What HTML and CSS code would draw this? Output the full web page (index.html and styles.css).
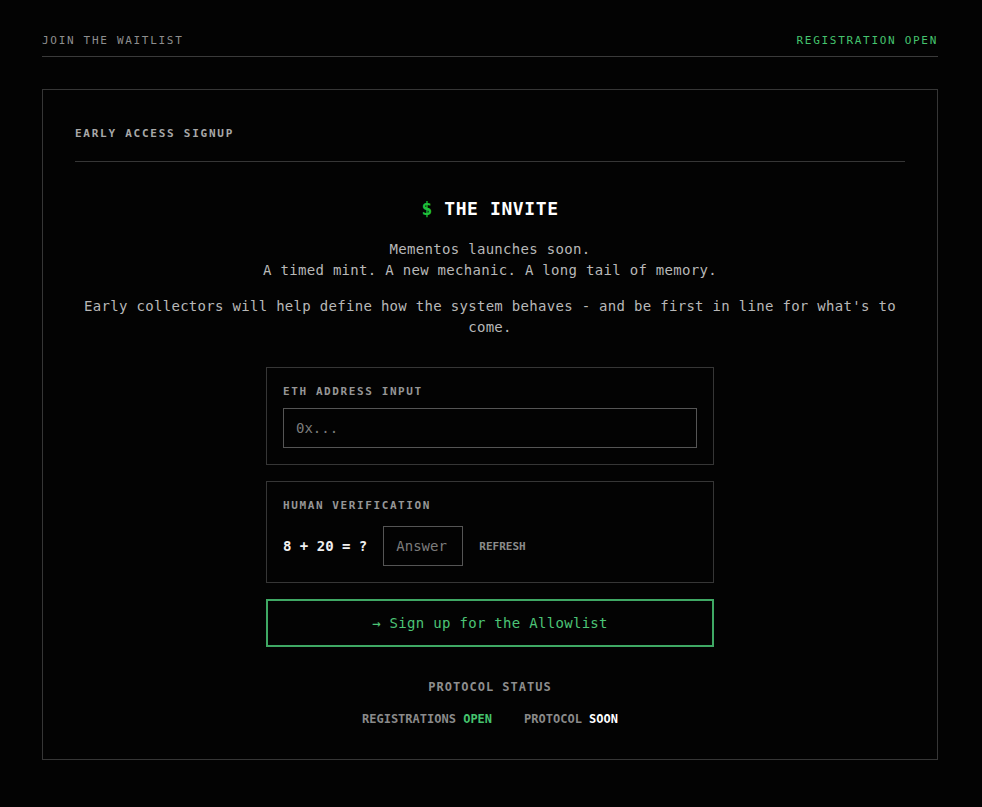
FILE: index.html
```html
<!DOCTYPE html>
<html>
<head>
<link rel="stylesheet" href="styles.css">
</head>
<body>
    <div class="page">
        <header class="topbar">
            <span class="topbar-title">JOIN THE WAITLIST</span>
            <span class="topbar-status">REGISTRATION OPEN</span>
        </header>

        <section class="card">
            <div class="card-label">EARLY ACCESS SIGNUP</div>

            <h1 class="invite-title"><span class="prompt">$</span> THE INVITE</h1>
            <p class="invite-text">Mementos launches soon.<br>A timed mint. A new mechanic. A long tail of memory.</p>
            <p class="invite-text">Early collectors will help define how the system behaves - and be first in line for what's to come.</p>

            <form class="signup" onsubmit="return false">
                <div class="field-box">
                    <label class="field-label" for="eth">ETH ADDRESS INPUT</label>
                    <input id="eth" class="text-input" type="text" placeholder="0x...">
                </div>

                <div class="field-box">
                    <div class="field-label">HUMAN VERIFICATION</div>
                    <div class="captcha-row">
                        <span class="captcha-question">8 + 20 = ?</span>
                        <input class="text-input answer-input" type="text" placeholder="Answer">
                        <button class="refresh-btn" type="button">REFRESH</button>
                    </div>
                </div>

                <button class="submit-btn" type="submit">&rarr; Sign up for the Allowlist</button>
            </form>

            <div class="protocol">
                <div class="protocol-title">PROTOCOL STATUS</div>
                <div class="protocol-row">
                    <span>REGISTRATIONS <b class="ok">OPEN</b></span>
                    <span>PROTOCOL <b class="soon">SOON</b></span>
                </div>
            </div>
        </section>
    </div>
</body>
</html>
```

FILE: styles.css
```css
body {
    margin: 0;
    background-color: #030303;
    color: #b0b0b0;
    font-family: "DejaVu Sans Mono", "Liberation Mono", monospace;
}

.page {
    width: 896px;
    margin-left: 42px;
    padding-bottom: 46px;
}

.topbar {
    display: flex;
    justify-content: space-between;
    padding: 33px 0 7px;
    border-bottom: 1px solid #3a3a3a;
    font-size: 11px;
    line-height: 16px;
    letter-spacing: 1.7px;
}

.topbar-title {
    color: #8e8e8e;
}

.topbar-status {
    color: #45c46e;
}

.card {
    margin-top: 32px;
    border: 1px solid #363636;
    padding: 36px 32px 32px;
}

.card-label {
    font-size: 11px;
    line-height: 16px;
    letter-spacing: 1.75px;
    font-weight: bold;
    color: #a8a8a8;
    padding-bottom: 19px;
    border-bottom: 1px solid #363636;
}

.invite-title {
    margin: 35px 0 0;
    text-align: center;
    font-size: 18px;
    line-height: 24px;
    letter-spacing: 0.6px;
    color: #ffffff;
}

.prompt {
    color: #1fbf3a;
}

.invite-text {
    margin: 18px 0 0;
    text-align: center;
    font-size: 14px;
    line-height: 21px;
    letter-spacing: 0.3px;
    color: #b8b8b8;
}

.invite-text + .invite-text {
    margin-top: 15px;
}

.signup {
    width: 448px;
    margin: 29px auto 0;
    display: flex;
    flex-direction: column;
    gap: 16px;
}

.field-box {
    border: 1px solid #363636;
    padding: 16px;
    display: flex;
    flex-direction: column;
}

.field-label {
    font-size: 11px;
    line-height: 16px;
    letter-spacing: 1.6px;
    font-weight: bold;
    color: #969696;
    margin-bottom: 8px;
}

.field-box + .field-box .field-label {
    margin-bottom: 12px;
}

.text-input {
    box-sizing: border-box;
    height: 40px;
    background-color: #030303;
    border: 1px solid #555555;
    padding: 0 12px;
    font-family: inherit;
    font-size: 14px;
    color: #dddddd;
    outline: none;
}

.text-input::placeholder {
    color: #7c7c7c;
}

.captcha-row {
    display: flex;
    align-items: center;
}

.captcha-question {
    font-size: 14px;
    font-weight: bold;
    color: #f0f0f0;
    margin-right: 16px;
}

.answer-input {
    width: 80px;
}

.refresh-btn {
    background: none;
    border: 0;
    padding: 0;
    margin-left: 16px;
    font-family: inherit;
    font-size: 11px;
    font-weight: bold;
    color: #8c8c8c;
    cursor: pointer;
}

.submit-btn {
    height: 48px;
    background: none;
    border: 2px solid #3fa864;
    font-family: inherit;
    font-size: 14px;
    letter-spacing: 0.3px;
    color: #4cc476;
    cursor: pointer;
}

.protocol {
    margin-top: 32px;
    text-align: center;
}

.protocol-title {
    font-size: 12px;
    line-height: 16px;
    letter-spacing: 1px;
    font-weight: bold;
    color: #8e8e8e;
}

.protocol-row {
    margin-top: 16px;
    display: flex;
    justify-content: center;
    gap: 32px;
    font-size: 12px;
    line-height: 16px;
    font-weight: bold;
    color: #8a8a8a;
}

.protocol-row .ok {
    color: #45c46e;
}

.protocol-row .soon {
    color: #ffffff;
}
```
